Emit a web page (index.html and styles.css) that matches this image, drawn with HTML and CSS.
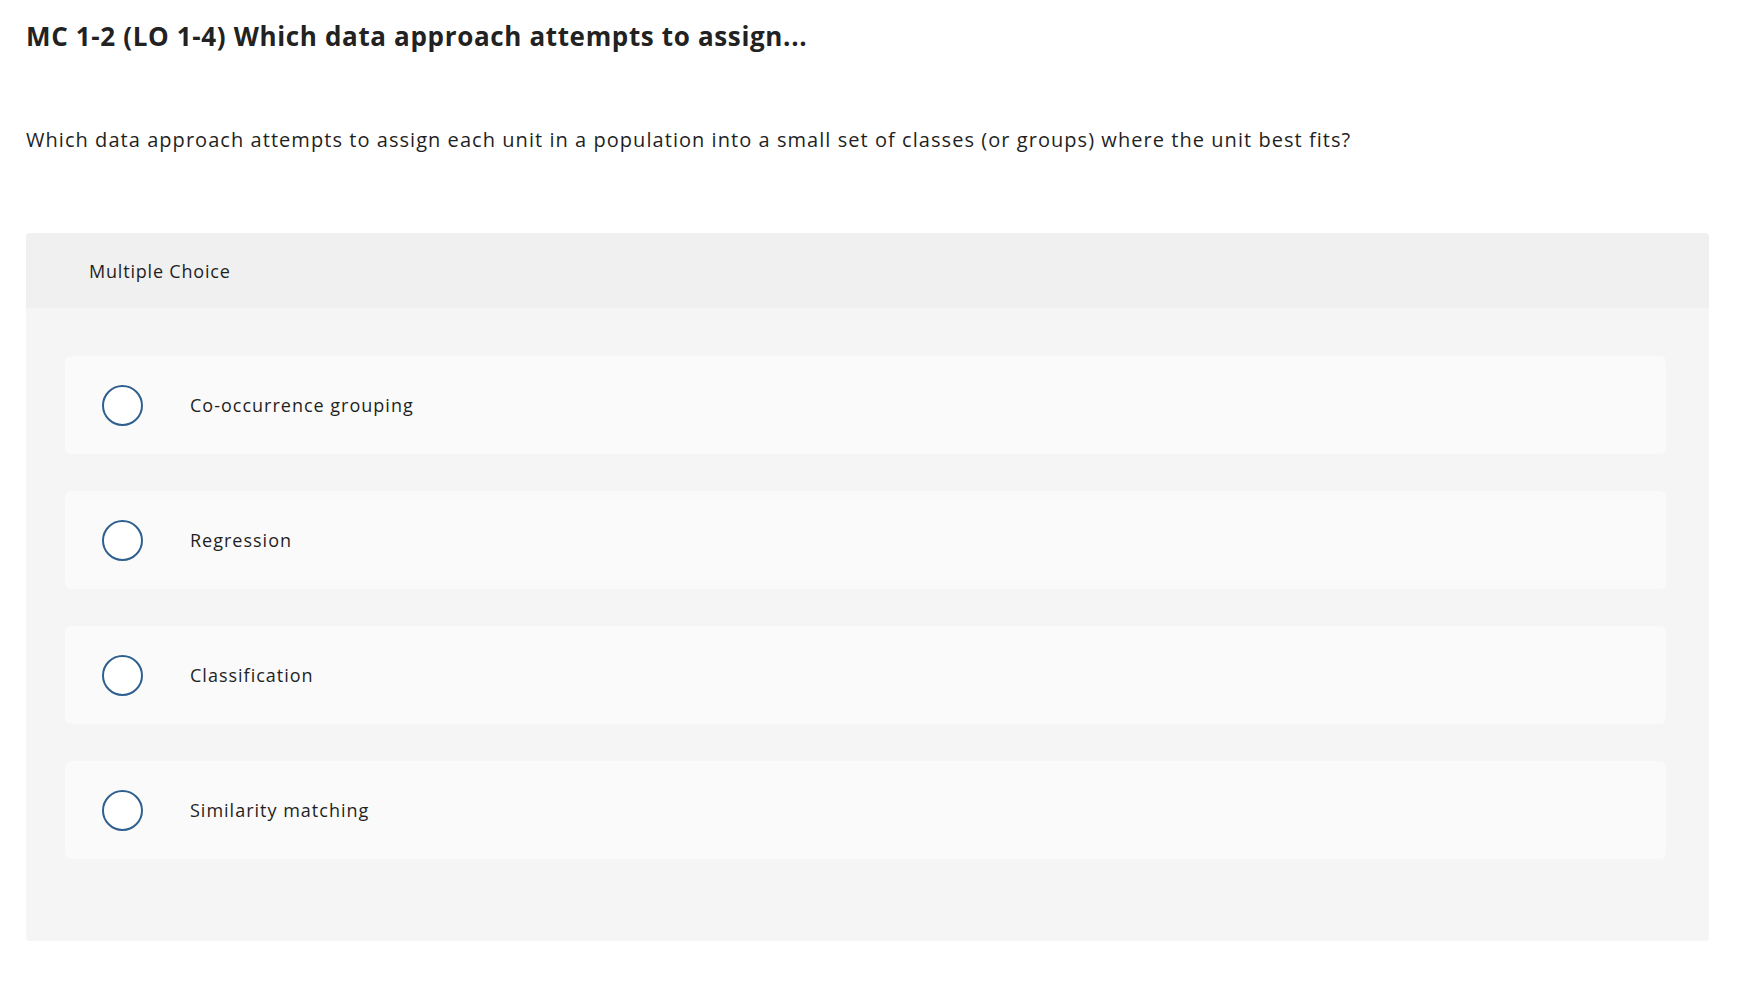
FILE: index.html
```html
<!DOCTYPE html>
<html lang="en">
<head>
<meta charset="utf-8">
<title>MC 1-2</title>
<link rel="stylesheet" href="styles.css">
</head>
<body>
<main class="page">
  <h1 class="title">MC 1-2 (LO 1-4) Which data approach attempts to assign...</h1>
  <p class="prompt">Which data approach attempts to assign each unit in a population into a small set of classes (or groups) where the unit best fits?</p>
  <section class="mc">
    <div class="mc-head">Multiple Choice</div>
    <div class="mc-body">
      <label class="opt"><span class="radio"></span><span class="opt-text">Co-occurrence grouping</span></label>
      <label class="opt"><span class="radio"></span><span class="opt-text">Regression</span></label>
      <label class="opt"><span class="radio"></span><span class="opt-text">Classification</span></label>
      <label class="opt"><span class="radio"></span><span class="opt-text">Similarity matching</span></label>
    </div>
  </section>
</main>
</body>
</html>
```

FILE: styles.css
```css
html, body {
  margin: 0;
  padding: 0;
  background: #ffffff;
}
body {
  font-family: "Open Sans", Lato, "Liberation Sans", sans-serif;
  color: #1f1f1f;
}
.page {
  padding: 0 32px 0 26px;
}
.title {
  margin: 0;
  padding-top: 18px;
  font-size: 26px;
  line-height: 36px;
  font-weight: 700;
  letter-spacing: 0.65px;
  color: #222;
}
.prompt {
  margin: 0;
  padding-top: 72px;
  font-size: 20px;
  line-height: 28px;
  letter-spacing: 1.05px;
  color: #1f1f1f;
}
.mc {
  margin-top: 79px;
  background: #f5f5f5;
  border-radius: 4px;
  overflow: hidden;
}
.mc-head {
  height: 75px;
  display: flex;
  align-items: center;
  padding-left: 63px;
  background: #f0f0f0;
  font-size: 18px;
  letter-spacing: 0.8px;
  color: #1f1f1f;
}
.mc-body {
  display: flex;
  flex-direction: column;
  gap: 37px;
  padding: 48px 43px 82px 39px;
}
.opt {
  height: 98px;
  display: flex;
  align-items: center;
  background: #fafafa;
  border-radius: 6px;
  padding-left: 37px;
}
.radio {
  width: 37px;
  height: 37px;
  border: 2px solid #2e5f8e;
  border-radius: 50%;
  background: #fff;
  flex: none;
}
.opt-text {
  margin-left: 47px;
  font-size: 18px;
  letter-spacing: 1px;
  color: #1f1f1f;
}
```
